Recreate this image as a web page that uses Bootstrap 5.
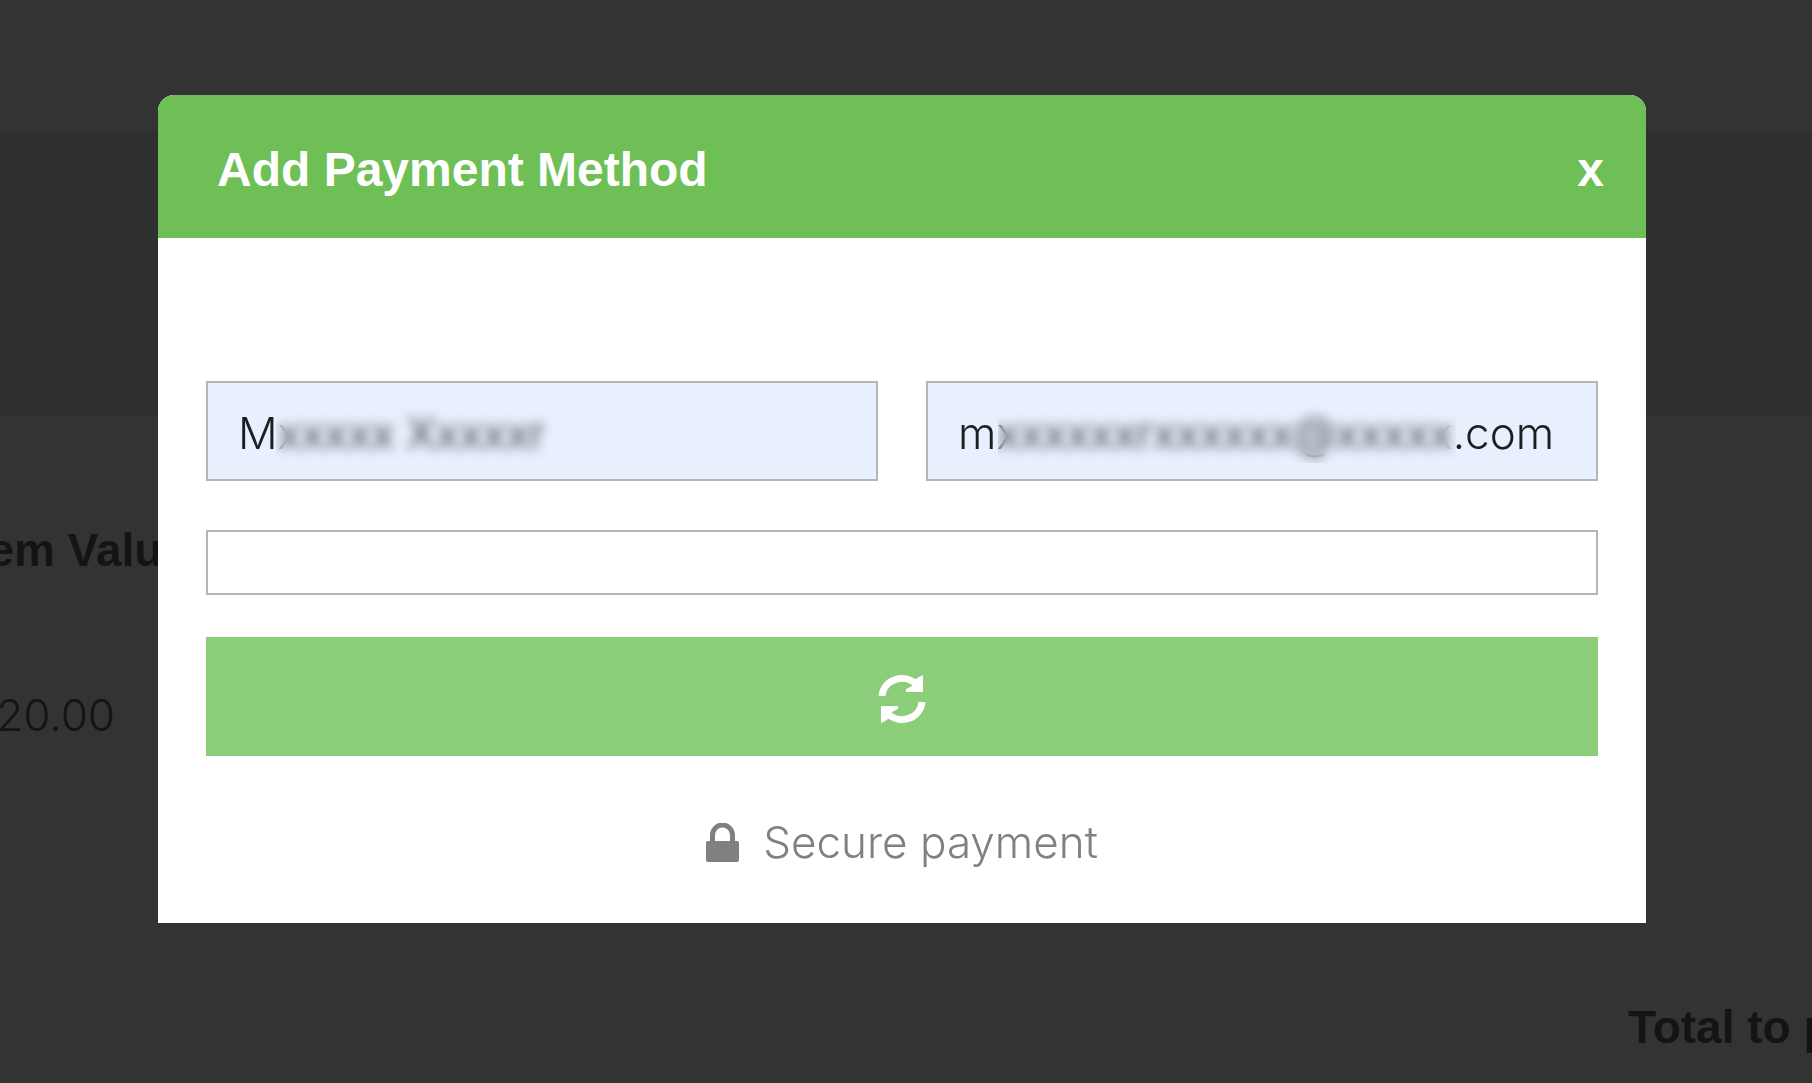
<!DOCTYPE html>
<html lang="en">
<head>
<meta charset="utf-8">
<meta name="viewport" content="width=device-width, initial-scale=1">
<title>Add Payment Method</title>
<link href="https://cdn.jsdelivr.net/npm/bootstrap@5.3.0/dist/css/bootstrap.min.css" rel="stylesheet">
<style>
  body { background: #333; color: #141416; font-family: "Liberation Sans", Arial, sans-serif; font-size: 46px; line-height: 56px; }
  .page-behind { height: 100vh; overflow: hidden; }
  .page-band { height: 286px; margin-top: 131px; background: #2f2f2f; }
  .thin-text { font-family: Inter, "Liberation Sans", sans-serif; font-weight: 300; font-size: 44px; }
  .item-column { width: 188px; padding-top: 105px; white-space: nowrap; }
  .item-price { padding: 109px 73px 0 0; }
  .order-total { width: 184px; padding-top: 256px; white-space: nowrap; }
  .pay-modal { padding: 95px 8px 0 0; }
  .pay-dialog { max-width: 1488px; margin: 0 auto; }
  .pay-content { border: 0; border-radius: 16px 16px 0 0; color: #808080; }
  .pay-header { height: 143px; padding: 6px 42px 0 59px; border: 0; border-radius: 16px 16px 0 0; background: #6fbf57; color: #fff; }
  .pay-title { font-size: 48px; line-height: 56px; }
  .pay-close { color: #fff; font-size: 48px; line-height: 56px; }
  .pay-body { padding: 143px 48px 53px; }
  .pay-fields { --bs-gutter-x: 48px; }
  .pay-input { height: 100px; padding: 4px 30px 0; border: 2px solid #b5b5b5; border-radius: 0; background: #e8effd; color: #1c1e22; line-height: 56px; }
  .pay-input:focus { background: #e8effd; }
  .pay-card { height: 65px; margin-top: 49px; background: #fff; }
  .pay-submit { height: 119px; margin-top: 42px; padding: 8px 0 4px; border: 0; border-radius: 0; background: #8bcd79; }
  .pay-secure { margin-top: 58px; gap: 24px; }
  .smudge { top: 18px; bottom: 18px; backdrop-filter: blur(6px); pointer-events: none; }
  .smudge-name { left: 94px; width: 280px; }
  .smudge-mail { left: 96px; right: 166px; }
</style>
</head>
<body>
<main class="page-behind d-flex flex-column">
  <div class="page-band flex-shrink-0"></div>
  <section class="item-column d-flex flex-column align-items-end">
    <div class="fw-bold">Item Value</div>
    <div class="item-price thin-text">$20.00</div>
  </section>
  <section class="order-total fw-bold align-self-end">Total to pay</section>
</main>

<div class="modal d-block pay-modal" tabindex="-1" role="dialog" aria-labelledby="payTitle">
  <div class="modal-dialog pay-dialog">
    <form class="modal-content pay-content">
      <div class="modal-header pay-header">
        <h1 class="modal-title fw-bold pay-title" id="payTitle">Add Payment Method</h1>
        <button type="button" class="btn p-0 border-0 fw-bold pay-close" aria-label="Close">x</button>
      </div>
      <div class="modal-body pay-body">
        <div class="row pay-fields">
          <div class="col-6 position-relative">
            <label class="visually-hidden" for="payName">Name</label>
            <input class="form-control pay-input thin-text" id="payName" type="text" value="Mxxxxx Xxxxxr">
            <span class="position-absolute smudge smudge-name"></span>
          </div>
          <div class="col-6 position-relative">
            <label class="visually-hidden" for="payMail">Email</label>
            <input class="form-control pay-input thin-text" id="payMail" type="text" value="mxxxxxxrxxxxxx@xxxxx.com">
            <span class="position-absolute smudge smudge-mail"></span>
          </div>
        </div>
        <label class="visually-hidden" for="payCard">Card</label>
        <input class="form-control pay-input pay-card" id="payCard" type="text">
        <button type="submit" class="btn w-100 d-flex align-items-center justify-content-center pay-submit" aria-label="Submit">
          <svg width="48" height="50" viewBox="0 0 48 50" aria-hidden="true"><path d="M4 22a20 19 0 0 1 34-12" fill="none" stroke="#fff" stroke-width="7"/><path d="M45 1v17H28v-3l6-3 5-8z" fill="#fff"/><path d="M44 28a20 19 0 0 1-34 12" fill="none" stroke="#fff" stroke-width="7"/><path d="M3 49V32h17v3l-6 3-5 8z" fill="#fff"/></svg>
        </button>
        <div class="d-flex justify-content-center align-items-center pay-secure">
          <svg width="33" height="39" viewBox="0 0 33 39" fill="#808080" aria-hidden="true"><path fill-rule="evenodd" d="M4 18v-6a12 12 0 0 1 25 0v6h2q2 0 2 2v17q0 2-2 2H2q-2 0-2-2V20q0-2 2-2zm5 0h15v-6a7 7 0 0 0-15 0z"/></svg>
          <span class="thin-text">Secure payment</span>
        </div>
      </div>
    </form>
  </div>
</div>
<script src="https://cdn.jsdelivr.net/npm/bootstrap@5.3.0/dist/js/bootstrap.bundle.min.js"></script>
</body>
</html>
